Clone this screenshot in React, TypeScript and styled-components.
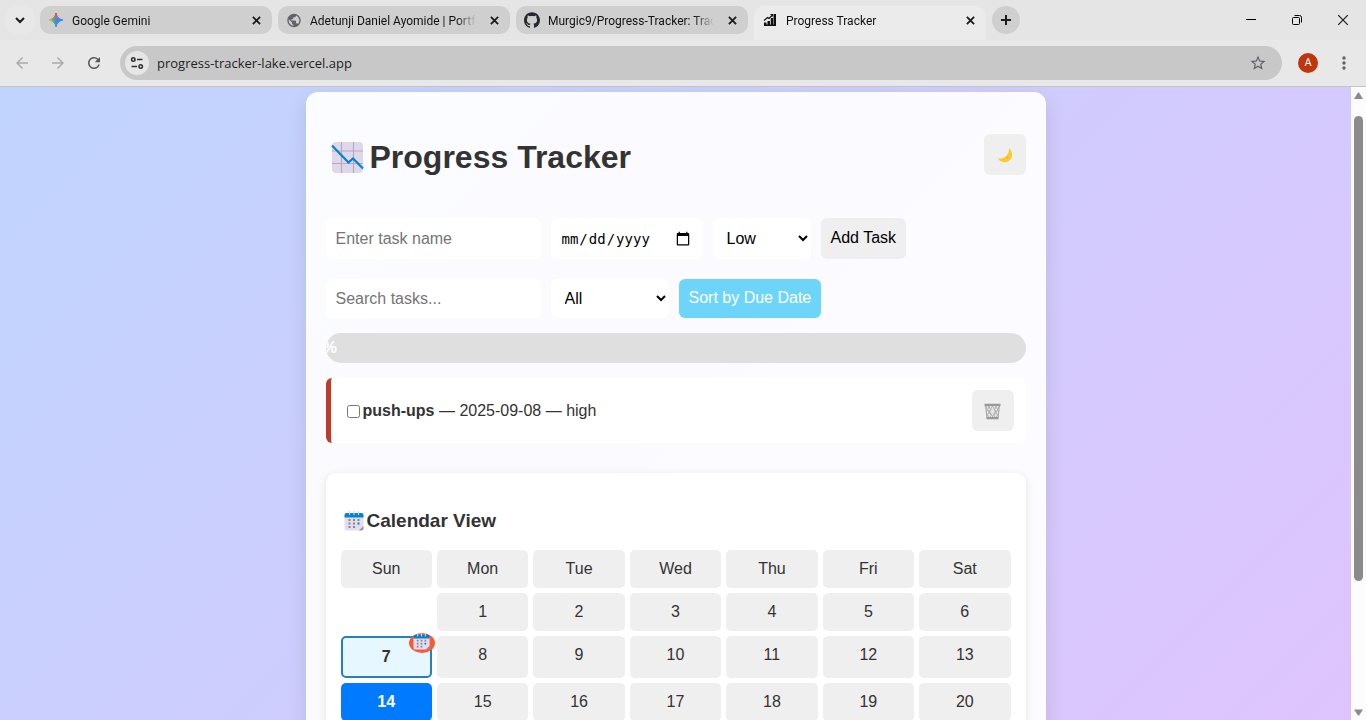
import React from "react";
import styled, { createGlobalStyle } from "styled-components";
import { MdArrowBack, MdArrowForward, MdMoreVert, MdPublic, MdRefresh, MdStarBorder } from "react-icons/md";
import { SiGithub } from "react-icons/si";

const GlobalStyle = createGlobalStyle`
  * { box-sizing: border-box; }
  body { margin: 0; font-family: "Liberation Sans", Arial, sans-serif; color: #333; }
  button, input, select { font-family: inherit; font-size: 16px; border: none; margin: 0; }
`;

const Window = styled.div`
  height: 100vh;
  display: flex;
  flex-direction: column;
  overflow: hidden;
`;

/* ---------- browser frame ---------- */

const Chrome = styled.header`
  flex: none;
  background: #e5e5e5;
  border-bottom: 1px solid #c4c4c4;
  font-family: "Open Sans", "Noto Sans", sans-serif;
`;

const TabStrip = styled.div`
  display: flex;
  align-items: flex-start;
  gap: 6px;
  height: 40px;
  padding: 6px 0 0 6px;
`;

const ChromeButton = styled.button<{ $size: number; $round?: boolean; $bg?: string; $color?: string }>`
  flex: none;
  display: flex;
  align-items: center;
  justify-content: center;
  width: ${(p) => p.$size}px;
  height: ${(p) => p.$size}px;
  padding: 0;
  border-radius: ${(p) => (p.$round ? "50%" : "8px")};
  background: ${(p) => p.$bg ?? "transparent"};
  color: ${(p) => p.$color ?? "#1f1f1f"};
`;

const Tab = styled.div<{ $active?: boolean }>`
  flex: 0 1 232px;
  min-width: 0;
  display: flex;
  align-items: center;
  gap: 8px;
  height: ${(p) => (p.$active ? 34 : 28)}px;
  padding: ${(p) => (p.$active ? "0 8px 6px" : "0 8px")};
  border-radius: ${(p) => (p.$active ? "10px 10px 0 0" : "10px")};
  background: ${(p) => (p.$active ? "#ebebeb" : "#cfcfcf")};
  color: #111;
  font-family: Roboto, "Open Sans", sans-serif;
  font-size: 12px;
  line-height: 16px;
`;

const TabIcon = styled.span`
  flex: none;
  display: flex;
  align-items: center;
  justify-content: center;
  width: 16px;
  height: 16px;
`;

const TabTitle = styled.span`
  flex: 1;
  min-width: 0;
  overflow: hidden;
  white-space: nowrap;
  padding-top: 1px;
  margin-right: 2px;
  mask-image: linear-gradient(to right, #000 calc(100% - 20px), transparent);
`;

const WindowControls = styled.div`
  display: flex;
  margin-left: auto;
`;

const WindowControl = styled.button`
  display: flex;
  align-items: center;
  justify-content: center;
  width: 46px;
  height: 28px;
  padding: 0;
  background: transparent;
`;

const Toolbar = styled.div`
  display: flex;
  align-items: center;
  gap: 8px;
  height: 46px;
  padding: 0 8px;
  background: #e8e8e8;
`;

const AddressBar = styled.div`
  flex: 1;
  display: flex;
  align-items: center;
  gap: 8px;
  height: 34px;
  margin: 0 8px 0 4px;
  padding: 0 12px 0 5px;
  border-radius: 17px;
  background: #c8c8c8;
`;

const Address = styled.input`
  flex: 1;
  min-width: 0;
  padding: 0;
  background: transparent;
  color: #1f1f1f;
  font-size: 13px;
`;

const Avatar = styled.button`
  width: 20px;
  height: 20px;
  margin-right: 4px;
  padding: 0;
  border-radius: 50%;
  background: #bf360c;
  color: #fff;
  font-family: Roboto, sans-serif;
  font-size: 11px;
  line-height: 20px;
`;

/* ---------- page area ---------- */

const Viewport = styled.div`
  flex: 1;
  min-height: 0;
  display: flex;
`;

const Scroller = styled.div`
  flex: 1;
  min-width: 0;
  overflow: hidden;
`;

const Page = styled.main`
  padding: 5px 0 20px;
  background: linear-gradient(135deg, #c0d4fe, #e0c3fc);
`;

const ScrollBar = styled.div`
  flex: none;
  width: 15px;
  display: flex;
  flex-direction: column;
  align-items: center;
  padding: 4px 0 3px;
  background: #fcfcfc;
`;

const ScrollTrack = styled.div`
  flex: 1;
  padding: 16px 0 0;
`;

const ScrollThumb = styled.div`
  width: 9px;
  height: 78.5%;
  border-radius: 5px;
  background: #8b8b8b;
`;

const Container = styled.div`
  max-width: 740px;
  margin: 0 auto;
  padding: 20px;
  border-radius: 12px;
  background: rgba(255, 255, 255, 0.92);
  box-shadow: 0 8px 20px rgba(0, 0, 0, 0.1);
`;

const TitleRow = styled.div`
  display: flex;
  align-items: center;
  justify-content: space-between;
  margin-bottom: 22px;
`;

const Title = styled.h1`
  display: flex;
  align-items: center;
  gap: 6px;
  margin: 25px 0 19px;
  padding-left: 5px;
  font-size: 32px;
  line-height: 40px;
`;

const IconButton = styled.button`
  display: flex;
  align-items: center;
  justify-content: center;
  width: 42px;
  height: 41px;
  padding: 2px 0 0;
  border-radius: 6px;
  background: #efefef;
`;

const Controls = styled.form<{ $height: number }>`
  display: flex;
  flex-wrap: wrap;
  gap: 10px;
  & + & { margin-top: 20px; }
  & > * { height: ${(p) => p.$height}px; border-radius: 6px; }
`;

const TextField = styled.input`
  width: 215px;
  padding: 0 10px;
  background: #fff;
  &::placeholder { color: #757575; }
`;

const DateField = styled.input`
  width: 152px;
  padding: 0 10px;
  background: #fff;
  color: #000;
  font-family: "DejaVu Sans Mono", monospace;
  font-size: 14px;
  &::-webkit-calendar-picker-indicator { width: 16px; height: 16px; }
`;

const Select = styled.select<{ $width: number }>`
  width: ${(p) => p.$width}px;
  padding: 0 10px;
  background: #fff;
  color: #000;
`;

const ActionButton = styled.button<{ $accent?: boolean }>`
  padding: 0 10px 2px;
  background: ${(p) => (p.$accent ? "#6dd5fa" : "#efefef")};
  color: ${(p) => (p.$accent ? "#fff" : "#000")};
`;

const Progress = styled.div`
  height: 30px;
  margin: 15px 0;
  overflow: hidden;
  border-radius: 15px;
  background: #dfdfdf;
`;

const ProgressFill = styled.div`
  display: flex;
  justify-content: center;
  height: 100%;
  background: #28a745;
  color: #fff;
  font-weight: bold;
  line-height: 30px;
`;

const TaskList = styled.ul`
  margin: 0 0 30px;
  padding: 0;
  list-style: none;
`;

const Task = styled.li`
  display: flex;
  align-items: center;
  justify-content: space-between;
  padding: 12px;
  border-left: 5px solid #c0392b;
  border-radius: 6px;
  background: #fff;
`;

const TaskLabel = styled.label`
  line-height: 20px;
  & input { margin: 3px 3px 3px 4px; vertical-align: -2px; width: 13px; height: 13px; }
`;

const Calendar = styled.section`
  padding: 15px;
  border-radius: 10px;
  background: #fff;
  box-shadow: 0 2px 10px rgba(0, 0, 0, 0.1);
`;

const CalendarTitle = styled.h2`
  display: flex;
  align-items: center;
  gap: 3px;
  margin: 21px 0 17px;
  padding-left: 3px;
  font-size: 19px;
  line-height: 24px;
`;

const Grid = styled.div`
  display: grid;
  grid-template-columns: repeat(7, 1fr);
  gap: 5px;
`;

const Cell = styled.div<{ $kind?: "task" | "today" | "empty" }>`
  position: relative;
  padding: 10px;
  border-radius: 5px;
  text-align: center;
  line-height: 18px;
  background: #efefef;
  ${(p) => p.$kind === "empty" && "background: none;"}
  ${(p) => p.$kind === "task" && "background: #e6f7ff; border: 2px solid #2980b9; font-weight: bold;"}
  ${(p) => p.$kind === "today" && "background: #007bff; color: #fff; font-weight: bold;"}
`;

const Badge = styled.span`
  position: absolute;
  top: -5px;
  right: -5px;
  display: flex;
  justify-content: center;
  width: 26px;
  height: 20px;
  border-radius: 50%;
  background: #ff5733;
`;

/* ---------- drawings ---------- */

const Cross = ({ size = 9, width = 2 }: { size?: number; width?: number }) => (
  <svg width={size} height={size} viewBox="0 0 10 10" stroke="#1a1a1a" strokeWidth={width} fill="none">
    <path d="M1 1l8 8M9 1l-8 8" />
  </svg>
);

const GeminiIcon = () => (
  <svg width="16" height="16" viewBox="0 0 16 16" strokeLinejoin="round">
    <defs>
      <linearGradient id="gemH" x1="0" y1="0" x2="1" y2="0">
        <stop offset="0" stopColor="#f9c21a" />
        <stop offset=".35" stopColor="#4db36b" />
        <stop offset=".55" stopColor="#3b87f5" />
        <stop offset="1" stopColor="#3186ff" />
      </linearGradient>
      <linearGradient id="gemV" x1="0" y1="0" x2="0" y2="1">
        <stop offset="0" stopColor="#f04438" />
        <stop offset=".3" stopColor="#d96584" stopOpacity=".7" />
        <stop offset=".5" stopColor="#3186ff" stopOpacity="0" />
      </linearGradient>
    </defs>
    <path d="M8 1C8.800 5 11 7.200 15 8 11 8.800 8.800 11 8 15 7.200 11 5 8.800 1 8 5 7.200 7.200 5 8 1z" fill="url(#gemH)" stroke="url(#gemH)" />
    <path d="M8 1C8.800 5 11 7.200 15 8 11 8.800 8.800 11 8 15 7.200 11 5 8.800 1 8 5 7.200 7.200 5 8 1z" fill="url(#gemV)" stroke="url(#gemV)" />
  </svg>
);

const BarsIcon = () => (
  <svg width="16" height="16" viewBox="0 0 16 16" fill="#111">
    <path d="M2 10.500h2.500V13H2zM5.500 9H8v4H5.500zM8.800 6h2.200v7H8.800zM11.500 2H14v11h-2.500zM2 12.500h12V14H2z" />
    <path d="M2 8.500l3.500-3 1.500 1L10 3.500" fill="none" stroke="#111" strokeWidth="1.200" />
    <path d="M8 2h3v3z" />
  </svg>
);

const TuneIcon = () => (
  <svg width="14" height="14" viewBox="0 0 14 14" fill="none" stroke="#333" strokeWidth="1.600">
    <circle cx="3.300" cy="3.500" r="1.700" />
    <path d="M7 3.500h5.500M1.500 10.500H7" />
    <circle cx="10.700" cy="10.500" r="1.700" />
  </svg>
);

const ChartDownIcon = () => (
  <svg width="33" height="33" viewBox="0 0 33 33">
    <rect x="1" y="1" width="31" height="31" rx="4" fill="#e0d8ea" />
    <path d="M10.500 1v31M22.500 1v31M1 10h31M1 22.500h31" stroke="#b5aabf" strokeWidth="1.200" />
    <path d="M1 4.500l16.500 17 4.500-4 10 10" fill="none" stroke="#0084ce" strokeWidth="2.200" />
  </svg>
);

const MoonIcon = () => (
  <svg width="16" height="16" viewBox="0 0 16 16">
    <path d="M12 .8C16.500 5.500 16 11.500 11.500 14.200 8 16.200 3 15.300.8 11.200 6.500 12.600 12.800 8.500 12 .8z" fill="#fdcb32" />
    <circle cx="10.500" cy="10.500" r="1.200" fill="#f5b81c" />
    <circle cx="6.500" cy="12.800" r=".8" fill="#f5b81c" />
    <circle cx="13" cy="7.500" r=".8" fill="#f5b81c" />
  </svg>
);

const BasketIcon = () => (
  <svg width="17" height="17" viewBox="0 0 17 17">
    <path d="M1.500 2h14L14 15H3z" fill="#e6e6e6" />
    <path
      d="M1.800 3l1.700 3.500L2.300 9M4.500 3l2.200 3.500L3.500 12 5 15M8.500 3L5.500 8l3.800 7M8.500 3l3 5-3.800 7M12.500 3l-2.200 3.500 3.200 5.500-1.500 3M15.200 3l-1.700 3.500L14.700 9M5.500 3L3.500 6.500 7 12.500 5.500 15M11.500 3l2 3.500-3.500 6 1.500 2.500"
      fill="none"
      stroke="#adadad"
      strokeWidth=".9"
    />
    <path d="M1.500 2L3 15M15.500 2L14 15" stroke="#a3a3a3" strokeWidth="1" />
    <path d="M.5.800h16V3H.5zM2.500 14h12v2.200h-12z" fill="#999" />
  </svg>
);

const CalendarIcon = ({ size }: { size: number }) => (
  <svg width={size} height={size} viewBox="0 0 20 20">
    <path d="M.5 5h19v10.500L15.500 19.500h-13a2 2 0 0 1-2-2z" fill="#e4ddec" />
    <path d="M19.500 15l-4.500 4.500h2.500a2 2 0 0 0 2-2z" fill="#998ea4" />
    <path d="M.5 4a2 2 0 0 1 2-2h15a2 2 0 0 1 2 2v2.500H.5z" fill="#0084ce" />
    <path d="M5.500 0v4M10 0v4M14.500 0v4" stroke="#d8d0e0" strokeWidth="1.200" />
    <path d="M4.500 8h2v2h-2zM9 8h2v2H9zM13.500 8h2v2h-2zM4.500 11.500h2v2h-2zM9 11.500h2v2H9zM4.500 15h2v2h-2zM9 15h2v2H9z" fill="#8d8299" />
    <path d="M13.500 11.500h2v2h-2z" fill="#0084ce" />
  </svg>
);

const ScrollArrow = ({ down }: { down?: boolean }) => (
  <svg width="9" height="9" viewBox="0 0 9 9" fill="#8b8b8b">
    <path d={down ? "M0 1.500h9L5 7.500H4z" : "M0 8h9L5 1.500H4z"} />
  </svg>
);

/* ---------- content ---------- */

const tabs = [
  { title: "Google Gemini", icon: <GeminiIcon /> },
  { title: "Adetunji Daniel Ayomide | Portfolio", icon: <MdPublic size={17} color="#5f6368" /> },
  { title: "Murgic9/Progress-Tracker: Track", icon: <SiGithub size={16} color="#24292f" /> },
  { title: "Progress Tracker", icon: <BarsIcon />, active: true },
];

const weekdays = ["Sun", "Mon", "Tue", "Wed", "Thu", "Fri", "Sat"];
const days = Array.from({ length: 30 }, (_, i) => i + 1);
const percent = 0;

const kindOf = (day: number) => (day === 7 ? "task" : day === 14 ? "today" : undefined);

export default function App() {
  return (
    <Window>
      <GlobalStyle />
      <Chrome>
        <TabStrip>
          <ChromeButton $size={28} $bg="#e8e8e8" aria-label="Search tabs">
            <svg width="10" height="10" viewBox="0 0 10 10" fill="none" stroke="#1a1a1a" strokeWidth="2">
              <path d="M1 3l4 4 4-4" />
            </svg>
          </ChromeButton>
          {tabs.map((tab) => (
            <Tab key={tab.title} $active={tab.active}>
              <TabIcon>{tab.icon}</TabIcon>
              <TabTitle>{tab.title}</TabTitle>
              <ChromeButton $size={16} aria-label={`Close ${tab.title}`}>
                <Cross />
              </ChromeButton>
            </Tab>
          ))}
          <ChromeButton $size={28} $round $bg="#cfcfcf" aria-label="New tab">
            <svg width="10" height="10" viewBox="0 0 10 10" stroke="#1a1a1a" strokeWidth="2">
              <path d="M5 0v10M0 5h10" />
            </svg>
          </ChromeButton>
          <WindowControls>
            <WindowControl aria-label="Minimize">
              <svg width="10" height="10" viewBox="0 0 10 10" fill="#000"><path d="M0 4h10v1H0z" /></svg>
            </WindowControl>
            <WindowControl aria-label="Restore">
              <svg width="10" height="10" viewBox="0 0 10 10" fill="none" stroke="#000">
                <rect x=".5" y="2.500" width="7" height="7" rx="1" />
                <path d="M2.500.5h5a2 2 0 0 1 2 2v5" />
              </svg>
            </WindowControl>
            <WindowControl aria-label="Close window"><Cross size={12} width={1} /></WindowControl>
          </WindowControls>
        </TabStrip>
        <Toolbar>
          <ChromeButton $size={28} $color="#ababab" aria-label="Back"><MdArrowBack size={18} /></ChromeButton>
          <ChromeButton $size={28} $color="#ababab" aria-label="Forward"><MdArrowForward size={18} /></ChromeButton>
          <ChromeButton $size={28} $color="#55585c" aria-label="Reload"><MdRefresh size={18} /></ChromeButton>
          <AddressBar>
            <ChromeButton $size={24} $round $bg="#e6e6e6" aria-label="Site information"><TuneIcon /></ChromeButton>
            <Address aria-label="Address" defaultValue="progress-tracker-lake.vercel.app" />
            <ChromeButton $size={24} $color="#5f6368" aria-label="Bookmark this tab"><MdStarBorder size={18} /></ChromeButton>
          </AddressBar>
          <Avatar aria-label="Profile">A</Avatar>
          <ChromeButton $size={28} $color="#5f6368" aria-label="Menu"><MdMoreVert size={20} /></ChromeButton>
        </Toolbar>
      </Chrome>

      <Viewport>
        <Scroller>
          <Page>
            <Container>
              <TitleRow>
                <Title><ChartDownIcon />Progress Tracker</Title>
                <IconButton aria-label="Toggle dark mode"><MoonIcon /></IconButton>
              </TitleRow>

              <Controls $height={41} onSubmit={(e) => e.preventDefault()}>
                <TextField type="text" placeholder="Enter task name" aria-label="Task name" />
                <DateField type="date" aria-label="Due date" />
                <Select $width={98} aria-label="Priority">
                  <option>Low</option>
                  <option>Medium</option>
                  <option>High</option>
                </Select>
                <ActionButton type="submit">Add Task</ActionButton>
              </Controls>
              <Controls $height={39} onSubmit={(e) => e.preventDefault()}>
                <TextField type="text" placeholder="Search tasks..." aria-label="Search tasks" />
                <Select $width={118} aria-label="Filter">
                  <option>All</option>
                  <option>Completed</option>
                  <option>Pending</option>
                </Select>
                <ActionButton type="button" $accent>Sort by Due Date</ActionButton>
              </Controls>

              <Progress>
                <ProgressFill style={{ width: `${percent}%` }}>{percent}%</ProgressFill>
              </Progress>

              <TaskList>
                <Task>
                  <TaskLabel>
                    <input type="checkbox" />
                    <strong>push-ups</strong> — 2025-09-08 — high
                  </TaskLabel>
                  <IconButton aria-label="Delete task"><BasketIcon /></IconButton>
                </Task>
              </TaskList>

              <Calendar>
                <CalendarTitle><CalendarIcon size={20} />Calendar View</CalendarTitle>
                <Grid>
                  {weekdays.map((name) => <Cell key={name}>{name}</Cell>)}
                  <Cell $kind="empty" />
                  {days.map((day) => (
                    <Cell key={day} $kind={kindOf(day)}>
                      {day}
                      {day === 7 && <Badge><CalendarIcon size={17} /></Badge>}
                    </Cell>
                  ))}
                </Grid>
              </Calendar>
            </Container>
          </Page>
        </Scroller>
        <ScrollBar>
          <ScrollArrow />
          <ScrollTrack><ScrollThumb /></ScrollTrack>
          <ScrollArrow down />
        </ScrollBar>
      </Viewport>
    </Window>
  );
}
